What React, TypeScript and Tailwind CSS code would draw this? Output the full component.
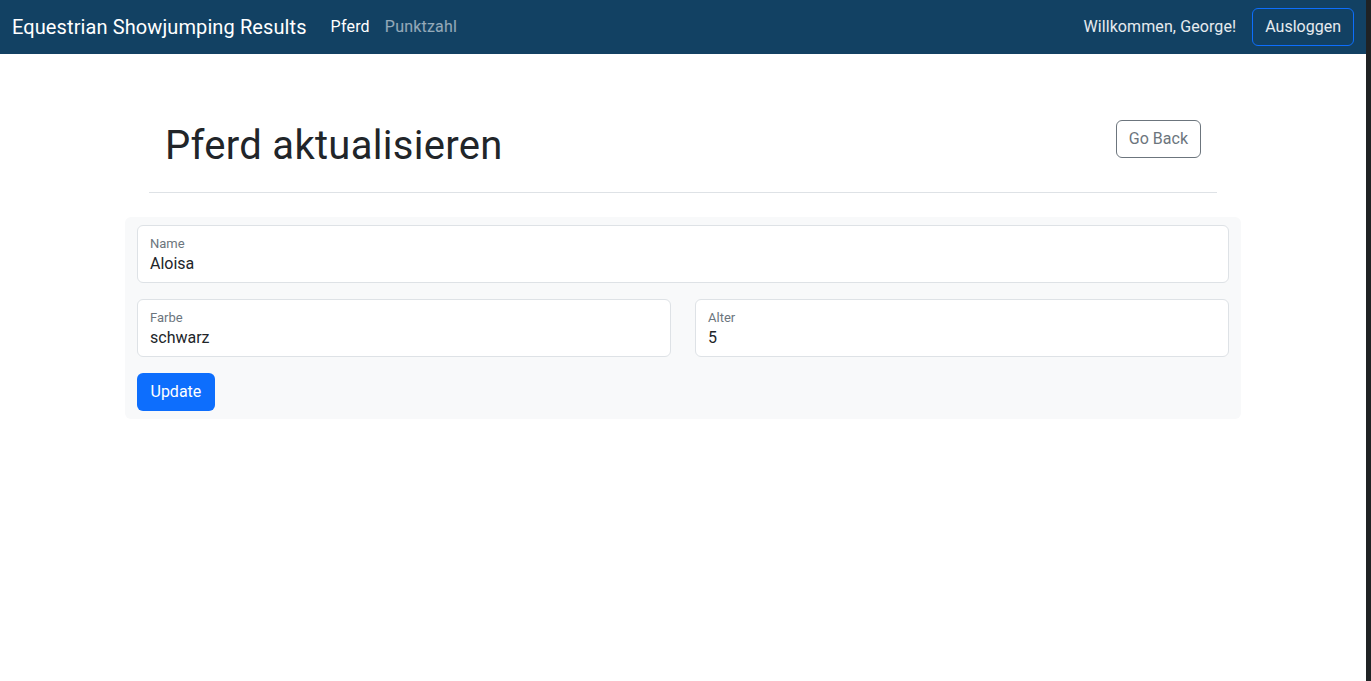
export default function App() {
  return (
    <div className="flex min-h-[681px] w-full bg-white" style={{ fontFamily: 'Roboto, "Noto Sans", sans-serif' }}>
      <div className="flex-1">
        <nav className="flex h-[54px] items-center bg-[#124163] px-3">
          <span className="text-[20px] tracking-[0.1px] text-white">Equestrian Showjumping Results</span>
          <span className="ml-6 text-[16px] tracking-[0.2px] text-white">Pferd</span>
          <span className="ml-[15px] text-[16px] tracking-[0.2px] text-white/55">Punktzahl</span>
          <div className="ml-auto flex items-center gap-4">
            <span className="text-[16px] tracking-[0.1px] text-white/90">Willkommen, George!</span>
            <button className="h-[38px] rounded-md border border-[#0d6efd] px-3 text-[16px] text-white/90">Ausloggen</button>
          </div>
        </nav>
        <main className="mx-auto w-[1116px] pt-[66px]">
          <div className="mx-6 flex items-start justify-between border-b border-[#dee2e6] pb-[22px] pl-4 pr-4">
            <h1 className="mt-[2px] text-[40px] font-normal leading-[1.2] tracking-[0.3px] text-[#212529]">Pferd aktualisieren</h1>
            <button className="h-[38px] rounded-md border border-[#6c757d] px-3 text-[16px] text-[#6c757d]">Go Back</button>
          </div>
          <form className="mt-6 flex flex-col gap-4 rounded-md bg-[#f8f9fa] p-3 pt-2 pb-2">
            <Field label="Name" value="Aloisa" />
            <div className="grid grid-cols-2 gap-6">
              <Field label="Farbe" value="schwarz" />
              <Field label="Alter" value="5" />
            </div>
            <div>
              <button type="button" className="h-[38px] rounded-md bg-[#0d6efd] px-[13.5px] text-[16px] text-white">Update</button>
            </div>
          </form>
        </main>
      </div>
      <div className="w-[5px] bg-[#1f2224]" />
    </div>
  )
}

function Field({ label, value }: { label: string; value: string }) {
  return (
    <div className="flex h-[58px] flex-col justify-center rounded-md border border-[#dee2e6] bg-white px-3 pt-[3px]">
      <span className="text-[13px] leading-[17px] text-[#6c757d]">{label}</span>
      <span className="text-[16px] leading-6 text-[#212529]">{value}</span>
    </div>
  )
}
